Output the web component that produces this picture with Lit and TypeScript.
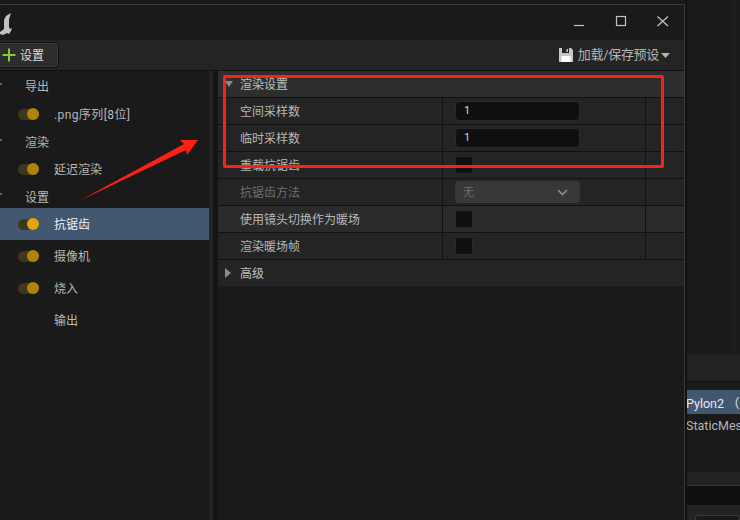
import { LitElement, html, css, svg } from "lit";
import { customElement } from "lit/decorators.js";

type Side = { label: string; h: number; kind: "group" | "item"; toggle?: boolean; selected?: boolean; wide?: boolean; low?: boolean };

const side: Side[] = [
  { label: "导出", h: 27, kind: "group" },
  { label: ".png序列[8位]", h: 29, kind: "item", toggle: true, wide: true },
  { label: "渲染", h: 26, kind: "group" },
  { label: "延迟渲染", h: 28, kind: "item", toggle: true },
  { label: "设置", h: 25, kind: "group", low: true },
  { label: "抗锯齿", h: 32, kind: "item", toggle: true, selected: true },
  { label: "摄像机", h: 32, kind: "item", toggle: true },
  { label: "烧入", h: 32, kind: "item", toggle: true },
  { label: "输出", h: 32, kind: "item" },
];

@customElement("app-root")
export class AppRoot extends LitElement {
  static styles = css`
    :host { display: block; width: 740px; height: 520px; overflow: hidden; position: relative; background: #1a1a1a;
      font-family: "Roboto", "Noto Sans CJK SC", sans-serif; font-size: 12px; color: #c0c0c0; }
    .stage { display: flex; height: 520px; }
    .window { width: 685px; flex: none; margin-top: 4px; border-top: 1px solid #3c3c3c; border-right: 1px solid #3c3c3c;
      box-sizing: border-box; display: flex; flex-direction: column; background: #1a1a1a; }
    .title { height: 35px; flex: none; background: #1a1a1a; display: flex; align-items: center; justify-content: space-between; }
    .logo { display: block; margin-top: 4px; }
    .winbtns { display: flex; gap: 22px; padding-right: 11px; margin-top: 1px; align-items: center; }
    .winbtns svg { display: block; width: 20px; height: 20px; }
    .toolbar { height: 30px; flex: none; background: #242424; display: flex; align-items: center; justify-content: space-between; box-sizing: border-box; }
    .add { height: 26px; box-sizing: border-box; margin-left: -4px; width: 63px; background: #2d2d2d; border: 1px solid #111; border-radius: 4px;
      display: flex; align-items: center; gap: 4px; padding-left: 5px; color: #dcdcdc; box-shadow: 0 0 0 1px #3a3a3a inset; }
    .add svg { display: block; }
    .add span { padding-bottom: 2px; }
    .preset { display: flex; align-items: center; color: #b4b4b4; padding-right: 14px; font-size: 13px; }
    .preset svg { display: block; }
    .preset span { margin: 0 2px 0 5px; padding-bottom: 4px; letter-spacing: -0.3px; }
    .body { flex: 1; display: flex; border-top: 1px solid #111; min-height: 0; }
    .left { width: 209px; flex: none; background: #1a1a1a; padding-top: 2px; box-sizing: border-box; }
    .track { width: 4px; flex: none; background: #242424; }
    .gutter { width: 5px; flex: none; background: #141414; }
    .row { display: flex; align-items: center; position: relative; color: #b8b8b8; }
    .row span { padding-bottom: 2px; }
    .row.low span { padding-bottom: 0; padding-top: 2px; }
    .row.wide span { letter-spacing: 0.4px; }
    .row.group { padding-left: 25px; }
    .row.item { padding-left: 18px; }
    .row.sel { background: #425870; color: #f0f0f0; }
    .tick { position: absolute; left: 0; top: 10px; width: 2px; height: 2px; background: #666; }
    .tog { width: 21px; height: 11px; border-radius: 6px; background: #3f3620; position: relative; flex: none; margin-right: 15px; }
    .tog::after { content: ""; position: absolute; right: 0; top: -1px; width: 12px; height: 12px; border-radius: 50%; background: #b18208; }
    .sel .tog::after { background: #e3a50b; }
    .notog { width: 36px; flex: none; }
    .details { flex: 1; min-width: 0; background: #1a1a1a; }
    .sect { height: 24px; padding-bottom: 2px; background: #2e2e2e; display: flex; align-items: center; padding-left: 22px; border-bottom: 1px solid #111; position: relative; color: #c0c0c0; }
    .arrow-d { position: absolute; left: 7px; top: 10px; width: 0; height: 0; border-left: 4px solid transparent; border-right: 4px solid transparent; border-top: 6px solid #8a8a8a; }
    .arrow-r { position: absolute; left: 7px; top: 8px; width: 0; height: 0; border-top: 5px solid transparent; border-bottom: 5px solid transparent; border-left: 6px solid #8a8a8a; }
    .adv { background: #242424; border-bottom: none; }
    .prop { height: 26px; display: grid; grid-template-columns: 225px 203px 1fr; background: #242424; border-bottom: 1px solid #111; }
    .prop.alt { background: #2b2b2b; }
    .prop.dim .name { color: #6e6e6e; }
    .name { display: flex; align-items: center; padding: 0 0 2px 22px; border-right: 1px solid #111; color: #b8b8b8; }
    .val { display: flex; align-items: center; padding-left: 12px; border-right: 1px solid #111; }
    .num { width: 125px; height: 20px; border-radius: 4px; background: #0f0f0f; border: 1px solid #2a2a2a; box-sizing: border-box; padding: 0 0 2px 8px;
      display: flex; align-items: center; color: #d8d8d8; font-size: 11px; }
    .chk { width: 18px; height: 18px; border-radius: 3px; background: #0f0f0f; border: 1px solid #2a2a2a; box-sizing: border-box; }
    .sel-box { width: 125px; height: 22px; border-radius: 4px; background: #383838; display: flex; align-items: center; justify-content: space-between; padding: 0 12px 0 8px; box-sizing: border-box; color: #6e6e6e; font-size: 11px; }
    .sel-box span { padding-bottom: 2px; }
    .sel-box svg { display: block; }
    .right { flex: 1; min-width: 0; display: flex; flex-direction: column; border-left: 2px solid #111; }
    .r-top { height: 355px; flex: none; display: flex; justify-content: flex-end; }
    .r-strip { width: 4px; background: #1e1e1e; margin-right: 4px; }
    .r-bar { height: 26px; flex: none; background: #232323; border-bottom: 1px solid #111; margin-bottom: 8px; }
    .r-sel { height: 24px; flex: none; background: #425870; color: #e8e8e8; font-size: 12.5px; display: flex; align-items: center; white-space: pre; overflow: hidden; text-indent: -1px; }
    .r-row { height: 22px; flex: none; color: #b4b4b4; font-size: 12.5px; display: flex; align-items: center; white-space: nowrap; overflow: hidden; text-indent: -1px; }
    .r-fill { height: 36px; flex: none; }
    .r-lite { height: 13px; flex: none; background: #232323; border-bottom: 1px solid #333; }
    .r-dark { height: 19px; flex: none; background: #0f0f0f; }
    .r-foot { flex: 1; background: #232323; padding: 10px 0 0 8px; }
    .r-input { height: 30px; border: 1px solid #3a3a3a; border-radius: 3px; background: #1a1a1a; }
    .redbox { position: absolute; left: 223px; top: 75px; width: 441px; height: 93px; box-sizing: border-box; border: 3px solid #ff2015; border-radius: 2px; pointer-events: none; }
    .redarrow { position: absolute; left: 0; top: 0; pointer-events: none; display: block; }
  `;

  private logo() {
    return html`<svg class="logo" width="14" height="24" viewBox="0 0 14 24">
      <path fill="#c2c2c2" d="M11 0 6 3 4 7 4 16 0 19 0 21 3 22 7 20 9 21 11 18 12 15 10 16 9 14 9 6 Z"/>
    </svg>`;
  }

  private winIcons() {
    const st = "fill:none;stroke:#c4c4c4;stroke-width:1.2";
    return html`<div class="winbtns">
      <svg viewBox="0 0 20 20">${svg`<path style=${st} d="M5 12.5H15"/>`}</svg>
      <svg viewBox="0 0 20 20">${svg`<rect style=${st} x="5.5" y="3.5" width="9" height="9"/>`}</svg>
      <svg viewBox="0 0 20 20">${svg`<path style=${st} d="M4.5 3.5 15 13M15 3.5 4.5 13"/>`}</svg>
    </div>`;
  }

  render() {
    return html`
      <div class="stage">
        <div class="window">
          <div class="title">${this.logo()}${this.winIcons()}</div>
          <div class="toolbar">
            <div class="add">
              <svg width="14" height="14" viewBox="0 0 14 14"><path d="M7 0.5V13.5M0.5 7H13.5" stroke="#8cc63f" stroke-width="2" fill="none"/></svg>
              <span>设置</span>
            </div>
            <div class="preset">
              <svg width="14" height="14" viewBox="0 0 14 14"><path fill="#c8c8c8" d="M0 0H12L14 2V14H0Z"/><path fill="#242424" d="M3 0H10V5H3Z"/><path fill="#c8c8c8" d="M7.500 1H9V4H7.500Z"/><path fill="#fff" d="M2.500 8H11.500V14H2.500Z"/></svg>
              <span>加载/保存预设</span>
              <svg width="9" height="5" viewBox="0 0 9 5"><path fill="#b4b4b4" d="M0 0H9L4.500 5Z"/></svg>
            </div>
          </div>
          <div class="body">
            <div class="left">
              ${side.map(
                (s) => html`<div class="row ${s.kind} ${s.selected ? "sel" : ""} ${s.wide ? "wide" : ""} ${s.low ? "low" : ""}" style="height:${s.h}px">
                  ${s.kind === "group" ? html`<i class="tick"></i>` : ""}
                  ${s.kind === "item" ? (s.toggle ? html`<i class="tog"></i>` : html`<i class="notog"></i>`) : ""}
                  <span>${s.label}</span>
                </div>`
              )}
            </div>
            <div class="track"></div>
            <div class="gutter"></div>
            <div class="details">
              <div class="sect"><i class="arrow-d"></i>渲染设置</div>
              <div class="prop"><div class="name">空间采样数</div><div class="val"><div class="num">1</div></div><div></div></div>
              <div class="prop"><div class="name">临时采样数</div><div class="val"><div class="num">1</div></div><div></div></div>
              <div class="prop"><div class="name">重载抗锯齿</div><div class="val"><div class="chk"></div></div><div></div></div>
              <div class="prop dim"><div class="name">抗锯齿方法</div><div class="val"><div class="sel-box"><span>无</span>
                <svg width="11" height="7" viewBox="0 0 11 7"><path d="M1 1 5.500 5.500 10 1" fill="none" stroke="#8a8a8a" stroke-width="1.600"/></svg></div></div><div></div></div>
              <div class="prop alt"><div class="name">使用镜头切换作为暖场</div><div class="val"><div class="chk"></div></div><div></div></div>
              <div class="prop"><div class="name">渲染暖场帧</div><div class="val"><div class="chk"></div></div><div></div></div>
              <div class="sect adv"><i class="arrow-r"></i>高级</div>
            </div>
          </div>
        </div>
        <div class="right">
          <div class="r-top"><div class="r-strip"></div></div>
          <div class="r-bar"></div>
          <div class="r-sel">Pylon2 （</div>
          <div class="r-row">StaticMes</div>
          <div class="r-fill"></div>
          <div class="r-lite"></div>
          <div class="r-dark"></div>
          <div class="r-foot"><div class="r-input"></div></div>
        </div>
      </div>
      <div class="redbox"></div>
      <svg class="redarrow" width="740" height="520" viewBox="0 0 740 520">
        <path fill="#ff2015" d="M79 201 184 144 180 140 198 140 187 155 186 150Z"/>
      </svg>
    `;
  }
}
